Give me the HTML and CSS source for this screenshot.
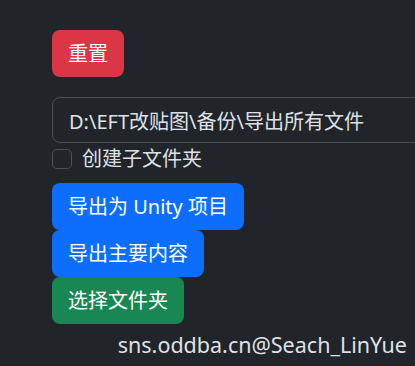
FILE: index.html
```html
<!DOCTYPE html>
<html>
<head>
  <title>导出工具</title>
  <meta name="viewport" content="width=device-width, initial-scale=1.0">
  <link rel="stylesheet" href="styles.css">
</head>
<body>
  <div id="panel">
    <div class="row">
      <button class="btn btn-danger">重置</button>
    </div>
    <input type="text" class="path-input" value="D:\EFT改贴图\备份\导出所有文件">
    <div class="form-check">
      <input type="checkbox" id="makeSub" class="check-input">
      <label for="makeSub">创建子文件夹</label>
    </div>
    <div class="actions">
      <button class="btn btn-primary">导出为 Unity 项目</button>
      <button class="btn btn-primary">导出主要内容</button>
      <button class="btn btn-success">选择文件夹</button>
    </div>
  </div>
  <footer>sns.oddba.cn@Seach_LinYue</footer>
</body>
</html>
```

FILE: styles.css
```css
html, body {
  margin: 0;
  overflow: hidden;
}
body {
  font-family: 'Noto Sans', 'Noto Sans CJK SC', sans-serif;
  background-color: #212529;
  color: #dee2e6;
  width: 415px;
  height: 366px;
  position: relative;
}
#panel {
  padding: 30px 0 0 52px;
  display: flex;
  flex-direction: column;
  align-items: flex-start;
}
.btn {
  font-family: inherit;
  font-size: 20px;
  line-height: 29px;
  padding: 8px 15px;
  border: 1px solid transparent;
  border-radius: 8px;
  color: #fff;
  cursor: pointer;
}
.btn-danger {
  background-color: #dc3545;
}
.btn-primary {
  background-color: #0d6efd;
}
.btn-success {
  background-color: #198754;
}
.path-input {
  box-sizing: border-box;
  margin-top: 20px;
  width: 380px;
  height: 46px;
  padding: 7px 16px;
  font-family: inherit;
  font-size: 20px;
  color: #dee2e6;
  background-color: #212529;
  border: 1px solid #495057;
  border-radius: 8px;
  outline: none;
}
.form-check {
  display: flex;
  align-items: flex-start;
  font-size: 20px;
  line-height: 30px;
  margin-top: 1px;
}
.check-input {
  appearance: none;
  width: 20px;
  height: 20px;
  margin: 5px 10px 0 0;
  border: 1px solid #495057;
  border-radius: 5px;
  background-color: #212529;
}
.actions {
  margin-top: 9px;
  display: flex;
  flex-direction: column;
  align-items: flex-start;
}
footer {
  position: absolute;
  right: 8px;
  bottom: 7px;
  font-size: 21.5px;
  line-height: 28px;
  color: #dee2e6;
}
```
